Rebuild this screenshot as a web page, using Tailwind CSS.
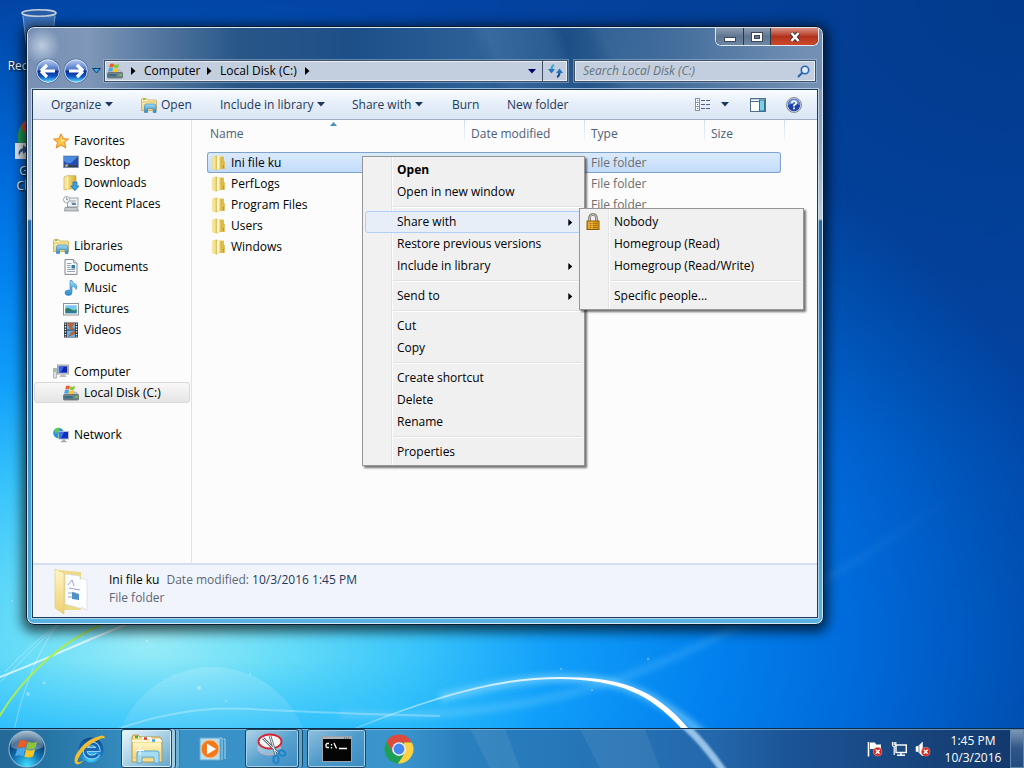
<!DOCTYPE html>
<html lang="en">
<head>
<meta charset="utf-8">
<title>Local Disk (C:)</title>
<script src="https://cdn.jsdelivr.net/npm/@tailwindcss/browser@4"></script>
</head>
<body class="font-['Open_Sans','Noto_Sans',sans-serif] text-xs leading-4 text-black">
<svg class="absolute size-0" aria-hidden="true">
  <defs>
    <linearGradient id="gold" x1="0" x2="1"><stop offset="0" stop-color="#fbf0b4"/><stop offset=".5" stop-color="#ecd26c"/><stop offset="1" stop-color="#d3ac3c"/></linearGradient>
    <linearGradient id="pale" x1="0" y1="0" x2="0" y2="1"><stop offset="0" stop-color="#fff6c4"/><stop offset="1" stop-color="#efcf73"/></linearGradient>
    <linearGradient id="sky" x1="0" y1="0" x2="0" y2="1"><stop offset="0" stop-color="#9fdcf5"/><stop offset="1" stop-color="#2c86c8"/></linearGradient>
    <linearGradient id="orb" x1="0" y1="0" x2="0" y2="1"><stop offset="0" stop-color="#b9cdf2"/><stop offset=".46" stop-color="#4371c4"/><stop offset=".5" stop-color="#08298c"/><stop offset=".75" stop-color="#1259c9"/><stop offset="1" stop-color="#53e1ff"/></linearGradient>
    <radialGradient id="start" cx=".5" cy=".95" r=".95"><stop offset="0" stop-color="#3fe0ff"/><stop offset=".4" stop-color="#1478b8"/><stop offset=".72" stop-color="#0c3f70"/><stop offset="1" stop-color="#8ea9bd"/></radialGradient>
    <radialGradient id="ieball" cx=".5" cy=".85" r=".9"><stop offset="0" stop-color="#45d5ff"/><stop offset=".5" stop-color="#1a7cc8"/><stop offset="1" stop-color="#0e3b80"/></radialGradient>
    <symbol id="flag" viewBox="0 0 20 20">
      <path d="M3.500 3.500C5.500 2 7.500 2.200 10 3.500L8.700 9.200C6.500 8 4.500 8.200 2 9.300Z" fill="#ee5b24"/>
      <path d="M10.800 3.900C13.400 5.200 15.800 5 18.600 3.500L17 9.200C14.500 10.500 12 10.600 9.500 9.500Z" fill="#8cc43a"/>
      <path d="M1.800 10.200C4.200 9 6.300 9 8.500 10.100L7 16C4.900 14.800 2.600 14.900 0 16Z" fill="#4aa8ea"/>
      <path d="M9.300 10.500C11.800 11.600 14.200 11.500 16.800 10.200L15.200 16C12.600 17.300 10.200 17.300 7.800 16.300Z" fill="#fcc622"/>
    </symbol>
    <symbol id="disk" viewBox="0 0 16 16">
      <path d="M2 9L4 7H13L15.500 9.500Z" fill="#c6ccce" stroke="#8b9396" stroke-width=".5"/>
      <rect x=".5" y="9.500" width="15" height="5.500" rx="1" fill="#77848b" stroke="#566167" stroke-width=".7"/>
      <rect x="1.200" y="11" width="8.500" height="2.500" fill="#3b6f88"/><rect x="12.500" y="11" width="2" height="1.600" fill="#51e536"/>
      <use href="#flag" x="1" y="-1" width="12" height="12"/>
    </symbol>
    <symbol id="library" viewBox="0 0 16 16">
      <path d="M.5 2.500Q.5 1.500 1.500 1.500H5.500L6.500 3H14.500Q15.500 3 15.500 4V13.500H.5Z" fill="url(#pale)" stroke="#cfa94a" stroke-width=".8"/>
      <path d="M2 2.300H4.500" stroke="#45b53b"/><path d="M1 5H15" stroke="#d9b757" stroke-width=".8"/>
      <path d="M3.500 15.500V9Q3.500 7 5.500 7H13Q15 7 15 9V15.500H12.200V11.500H6.500V15.500Z" fill="url(#sky)" stroke="#2f82b8" stroke-width=".6"/>
    </symbol>
    <symbol id="star" viewBox="0 0 16 16"><path d="M8 .8L10.100 5.700L15.500 6.100L11.400 9.500L12.800 15L8 12L3.200 15L4.600 9.500L.5 6.100L5.900 5.700Z" fill="#ffc44a" stroke="#e88620" stroke-linejoin="round"/><path d="M8 3L9.300 6.800L12.500 7.200L8 9Z" fill="#ffe9a8"/></symbol>
    <symbol id="desktop" viewBox="0 0 16 16"><rect x=".5" y="2" width="15" height="11.500" fill="#1f4fb4" stroke="#8a98ab" stroke-width=".8"/><path d="M1 2.500H15L8 9Q4 10 1 7Z" fill="#4d8be0"/><rect x="1" y="11" width="14" height="2.200" fill="#343f50"/><path d="M1.500 11.500L4 9.500L5.500 11.500L4 13Z" fill="#f48e34"/><circle cx="3" cy="12" r="1" fill="#58b9f3"/></symbol>
    <symbol id="downloads" viewBox="0 0 16 16"><path d="M1 2L4 .7H13V14H5L1 15Z" fill="url(#gold)" stroke="#c19c3a" stroke-width=".6"/><path d="M4.500 1V14" stroke="#fdf5cf"/><path d="M10 7H14V11H16L12 15.700L7.800 11H10Z" fill="#36a3e5" stroke="#1767a8" stroke-width=".7"/></symbol>
    <symbol id="recent" viewBox="0 0 16 16"><rect x="4.500" y="2" width="10.500" height="9" fill="#eef2f4" stroke="#878f96" stroke-width=".8"/><path d="M7 5H13M8 7H12" stroke="#97a4b0"/><path d="M9 7H13V9H9Z" fill="#5a8aa7"/><path d="M2 11.500H14L15.500 15H1.500Z" fill="#c5cace" stroke="#7e858a" stroke-width=".7"/><circle cx="3.600" cy="3.600" r="3.100" fill="#fff" stroke="#8b99a6" stroke-width=".9"/><path d="M3.600 1.500V3.800H5.200" fill="none" stroke="#5b6b78" stroke-width=".8"/></symbol>
    <symbol id="document" viewBox="0 0 16 16"><path d="M2 .6H10.500L14 4V15.400H2Z" fill="#fdfdfd" stroke="#80878c"/><path d="M10.500 .6V4H14" fill="#d9dfe4" stroke="#80878c" stroke-width=".7"/><path d="M4 4.500H8.500M4 6.500H7.500M4 8.500H7.500M4 10.500H12M4 12.500H12" stroke="#8a9db4" stroke-width=".9"/><rect x="8.500" y="6" width="3.500" height="3.500" fill="#327ba8"/></symbol>
    <symbol id="music" viewBox="0 0 16 16"><path d="M7 .5H9Q9.500 3 12.500 4Q15 6 13 9.500Q13 6.500 9 6.200V12Q9 15.500 5.500 15.500Q2 15.500 2 12.800Q2 10 5.500 10L7 10.400Z" fill="url(#sky)" stroke="#2a7fc4" stroke-width=".6"/></symbol>
    <symbol id="picture" viewBox="0 0 16 16"><rect x=".5" y="2.500" width="15" height="11.500" fill="#fff" stroke="#8b9399"/><rect x="2.300" y="4.300" width="11.400" height="8" fill="#79c6ee"/><path d="M2.300 7.500Q5 6 8 8.300T13.700 8.300V10H2.300Z" fill="#2e8050"/><path d="M2.300 10H13.700V12.300H2.300Z" fill="#32799e"/></symbol>
    <symbol id="video" viewBox="0 0 16 16"><rect x="1" y=".5" width="14" height="15" fill="#2d3740"/><rect x="4" y="1" width="8" height="6.500" fill="#6daee0"/><path d="M4 1H12L9 5L12 7.500H7Z" fill="#b5653d"/><rect x="4" y="8.500" width="8" height="6.500" fill="#5fb4ed"/><path d="M5 15L8 10L12 9V12Z" fill="#b5653d"/><path d="M2.500 1.500V15M13.500 1.500V15" stroke="#fff" stroke-width="1.400" stroke-dasharray="1.300 1.300"/></symbol>
    <symbol id="computer" viewBox="0 0 16 16"><rect x="4.500" y="1" width="11" height="9" fill="#d2d5da" stroke="#8d949b" stroke-width=".8"/><rect x="5.800" y="2.300" width="8.500" height="6.400" fill="#0f25b0"/><path d="M5.800 2.300H11L8 8.700H5.800Z" fill="#3b65e0"/><path d="M8 10.500H12L13.500 13H6.500Z" fill="#b9bec3"/><rect x=".7" y="4.500" width="2.600" height="9.500" fill="#e2e6e8" stroke="#8d949b" stroke-width=".7"/><rect x="1.200" y="5.500" width="1.500" height="2" fill="#45bf39"/></symbol>
    <symbol id="network" viewBox="0 0 16 16"><circle cx="5.500" cy="6" r="5.300" fill="#2c8fe0"/><path d="M2 2Q5 0 7 1.500Q6 5 3 6.500Q1 5 2 2ZM5 7Q8 7 8 9L5.500 11Q4 9 5 7Z" fill="#59cf47"/><rect x="6" y="4.500" width="9.500" height="7.500" fill="#1230bd" stroke="#b9c2d8" stroke-width=".9"/><path d="M6.500 5H11L8 11.500H6.500Z" fill="#4470e8"/><path d="M9.500 12.500H12V14H13.500V15.200H8V14H9.500Z" fill="#9fa6ad"/></symbol>
    <symbol id="folder" viewBox="0 0 16 16"><path d="M1.500 2L5 .5L9.500 1.500H13V14H9L5.500 15.500L1.500 14Z" fill="#e6cb60"/><path d="M1.500 2L5 1V15L1.500 14Z" fill="#f5e490"/><path d="M5.500 1.500L8.500 .8V13.500L5.500 15.200Z" fill="#fdf6c6"/><path d="M9.500 2H12.500V6H13.800V14H9.500Z" fill="#dcb84a"/><path d="M5.200 1V15.200" stroke="#b99732" stroke-width=".6"/><path d="M12.500 10V13" stroke="#49a3cf" stroke-width=".8"/></symbol>
    <symbol id="lock" viewBox="0 0 16 18"><path d="M4.500 9V5.500Q4.500 1.500 8 1.500T11.500 5.500V9" fill="none" stroke="#6e6a60" stroke-width="2.600"/><path d="M4.500 9V5.500Q4.500 1.500 8 1.500T11.500 5.500V9" fill="none" stroke="#d8d4c4" stroke-width="1"/><rect x="2" y="8" width="12" height="8.500" fill="#dc9a1c" stroke="#8a5a0c"/><path d="M3 10.500H13M3 12.500H13M3 14.500H13" stroke="#a86c10" stroke-width=".8"/><path d="M4 8.500V16M7 8.500V16" stroke="#ffd76c" stroke-width=".8"/></symbol>
    <symbol id="chrome" viewBox="0 0 48 48"><circle cx="24" cy="24" r="23" fill="#4caf50"/><path d="M4 12.500A23 23 0 0 1 44.500 13.500H24L14 30Z" fill="#dd4b3e"/><path d="M44.500 13.500A23 23 0 0 1 22 47L33.500 29L32 13.500Z" fill="#fdd045"/><path d="M4 12.500L14.200 29.500L24 34.500H31L22 47A23 23 0 0 1 4 12.500Z" fill="#1e9f57"/><circle cx="24" cy="24" r="11" fill="#f4f6f8"/><circle cx="24" cy="24" r="8.700" fill="#4587f3"/></symbol>
    <symbol id="down" viewBox="0 0 8 5"><path d="M0 0H8L4 4.500Z" fill="currentColor"/></symbol>
    <symbol id="right" viewBox="0 0 5 8"><path d="M0 0V8L4.500 4Z" fill="currentColor"/></symbol>
    <symbol id="badge" viewBox="0 0 10 10"><circle cx="5" cy="5" r="4.700" fill="#d8281c" stroke="#f7c3bd" stroke-width=".5"/><path d="M3 3L7 7M7 3L3 7" stroke="#fff" stroke-width="1.500"/></symbol>
  </defs>
</svg>

<div class="relative flex h-screen flex-col overflow-hidden bg-[#0a6fd8]">
  <!-- Wallpaper -->
  <svg class="absolute inset-0 size-full" viewBox="0 0 1024 768" preserveAspectRatio="none" aria-hidden="true">
    <defs>
      <radialGradient id="wall" gradientUnits="userSpaceOnUse" cx="0" cy="0" r="1" gradientTransform="translate(150 640) scale(960 650)">
        <stop offset="0" stop-color="#98ecf7"/><stop offset=".14" stop-color="#66dcf8"/><stop offset=".28" stop-color="#38c4fa"/><stop offset=".42" stop-color="#119ffa"/><stop offset=".58" stop-color="#0282ef"/><stop offset=".75" stop-color="#0068d8"/><stop offset=".9" stop-color="#0052b6"/><stop offset="1" stop-color="#0344a4"/>
      </radialGradient>
      <radialGradient id="shade" cx="1" cy="0" r=".6"><stop offset="0" stop-color="#002a60" stop-opacity=".35"/><stop offset="1" stop-color="#002a60" stop-opacity="0"/></radialGradient>
      <linearGradient id="floor" x1="0" y1="0" x2="0" y2="1"><stop offset=".86" stop-color="#00a8ff" stop-opacity="0"/><stop offset=".95" stop-color="#00a8ff" stop-opacity=".6"/></linearGradient>
      <linearGradient id="floorfade" x1="0" y1="0" x2="1" y2="0"><stop offset=".5" stop-color="#fff"/><stop offset="1" stop-color="#000"/></linearGradient>
      <mask id="leftside"><rect width="560" height="768" fill="url(#floorfade)"/></mask>
      <linearGradient id="trail" gradientUnits="userSpaceOnUse" x1="360" y1="0" x2="600" y2="0"><stop offset="0" stop-color="#fff" stop-opacity=".3"/><stop offset="1" stop-color="#fff"/></linearGradient>
      <linearGradient id="ray" gradientUnits="userSpaceOnUse" x1="360" y1="0" x2="960" y2="0"><stop offset="0" stop-color="#7fd4ff" stop-opacity=".45"/><stop offset="1" stop-color="#7fd4ff" stop-opacity="0"/></linearGradient>
      <linearGradient id="dome" x1="0" y1="0" x2="0" y2="1"><stop offset="0" stop-color="#fff" stop-opacity=".16"/><stop offset=".5" stop-color="#fff" stop-opacity=".03"/></linearGradient>
      <filter id="soft" x="-20%" y="-20%" width="140%" height="140%"><feGaussianBlur stdDeviation="3"/></filter>
    </defs>
    <rect width="1024" height="768" fill="url(#wall)"/>
    <rect width="1024" height="768" fill="url(#shade)"/>
    <rect width="560" height="768" fill="url(#floor)" mask="url(#leftside)" opacity=".7"/>
    <circle cx="212" cy="765" r="98" fill="url(#dome)"/>
    <path d="M340 714Q540 725 700 645Q840 580 960 490" fill="none" stroke="url(#ray)" stroke-width="7" filter="url(#soft)"/>
    <path d="M440 698Q520 678 560 678C620 678 660 690 740 768" fill="none" stroke="#8fdcff" stroke-opacity=".6" stroke-width="8" filter="url(#soft)"/>
    <path d="M340 734C440 693 500 677 560 677C620 677 654 688 688 728L726 770L716 770L681 728C650 694 620 680 560 679C500 679 440 695 340 735Z" fill="url(#trail)"/>
    <path d="M110 732Q180 705 250 709T440 716" fill="none" stroke="#fff" stroke-opacity=".28" stroke-width="2"/>
    <path d="M0 677C50 658 90 638 150 615" fill="none" stroke="#fff" stroke-opacity=".7" stroke-width="2"/>
    <path d="M0 682C20 664 40 640 62 622M5 672C24 652 44 634 60 622M14 732C22 690 40 645 60 622" fill="none" stroke="#fff" stroke-opacity=".35"/>
    <path d="M-4 722C20 680 60 640 112 620" fill="none" stroke="#a8ec5a" stroke-width="2"/>
    <g fill="#fff" fill-opacity=".35"><circle cx="28" cy="694" r="2"/><circle cx="44" cy="683" r="1.500"/><circle cx="199" cy="688" r="2"/><circle cx="147" cy="641" r="1.200"/><circle cx="226" cy="701" r="1"/><circle cx="250" cy="674" r="1"/><circle cx="12" cy="601" r="1"/><circle cx="648" cy="659" r="1.200"/><circle cx="561" cy="669" r="1"/><circle cx="592" cy="690" r="1"/></g>
  </svg>

  <main class="relative min-h-0 flex-1">
    <!-- Desktop shortcuts -->
    <div class="absolute top-2 left-[2px] flex w-[74px] flex-col gap-10 text-center leading-[15px] text-white [text-shadow:1px_1px_2px_#000]">
      <a href="#" class="flex flex-col items-center gap-[2px]">
        <svg class="size-12" viewBox="0 0 48 48" aria-hidden="true"><path d="M7 4L12 44Q24 50 36 44L41 4Z" fill="#7fa6d8" fill-opacity=".45"/><path d="M8 8L12 44M40 8L36 44" stroke="#b9cce8" stroke-opacity=".6"/><ellipse cx="24" cy="5" rx="17" ry="3.200" fill="#2a5da8" stroke="#c8d3df" stroke-width="1.600"/></svg>
        <span class="whitespace-nowrap">Recycle Bin</span>
      </a>
      <a href="#" class="flex flex-col items-center gap-[2px]">
        <svg class="size-12" viewBox="0 0 48 48" aria-hidden="true"><use href="#chrome" x="2" y="2" width="44" height="44"/><rect x="0" y="30" width="16" height="16" fill="#e9eef2"/><path d="M4 43Q2 37 8 35V32L14 37L8 41V38Q5 39 4 43Z" fill="#2b5fa0"/></svg>
        <span>Google Chrome</span>
      </a>
    </div>

    <!-- Explorer window -->
    <section aria-label="Local Disk (C:)" class="absolute top-[26px] right-[200px] bottom-[103px] left-[26px] flex flex-col rounded-lg border border-[#0b1c2e] bg-[linear-gradient(180deg,#7691b4_0,#8fa6c6_110px,#b8cbe0_192px,#2467a3_194px,#3b93cb_420px,#5ab2e0_100%)] px-[5px] pb-[6px] shadow-[0_3px_12px_4px_rgba(0,0,0,0.65),inset_0_0_0_1px_rgba(230,242,252,0.85)]">
      <div class="-mx-1 mt-px flex h-[61px] flex-col rounded-t-md bg-[radial-gradient(circle_at_14px_18px,rgba(225,235,248,.65)_0,rgba(225,235,248,0)_18px),linear-gradient(65deg,transparent_57%,rgba(120,165,205,.16)_59%,rgba(120,165,205,.12)_66%,transparent_68%,transparent_71%,rgba(120,165,205,.12)_73%,transparent_80%),linear-gradient(90deg,#7790b4_0,#7f97b8_60px,#53779f_130px,#285688_210px,#1d4f88_330px,#2e6198_450px,#1d4f86_540px,#346294_600px,#7390b4_780px)]">
        <div class="flex h-[18px] justify-end pr-[3px]">
          <div class="flex rounded-b-md border border-t-0 border-[#dfe9f2] bg-[#26394f]">
            <button aria-label="Minimize" class="grid w-[27px] place-items-center rounded-bl-md bg-linear-to-b from-[#8d9db3] via-[#5f7590] via-50% to-[#6e87a3]"><svg class="h-3 w-3" viewBox="0 0 12 12"><rect x=".5" y="6.500" width="11" height="4" fill="#fff" stroke="#3d4758"/></svg></button>
            <button aria-label="Maximize" class="grid w-[27px] place-items-center border-l border-[#26394f] bg-linear-to-b from-[#8d9db3] via-[#5f7590] via-50% to-[#6e87a3]"><svg class="h-3 w-3" viewBox="0 0 12 12"><rect x="2" y="3" width="8" height="6" fill="none" stroke="#3d4758" stroke-width="4"/><rect x="2" y="3" width="8" height="6" fill="none" stroke="#fff" stroke-width="2"/></svg></button>
            <button aria-label="Close" class="grid w-[48px] place-items-center rounded-br-md border-l border-[#26394f] bg-linear-to-b from-[#d98f83] via-[#b2321c] via-50% to-[#cf4a2c]"><svg class="h-3 w-3" viewBox="0 0 12 12"><path d="M2.500 2L9.500 10M9.500 2L2.500 10" stroke="#4a2b2b" stroke-width="4.200"/><path d="M2.500 2L9.500 10M9.500 2L2.500 10" stroke="#fff" stroke-width="2.600"/></svg></button>
          </div>
        </div>
        <div class="mt-[14px] flex items-center pr-[6px] pl-[7px]">
          <button aria-label="Back" class="-my-1 rounded-full"><svg class="size-[26px]" viewBox="0 0 26 26"><circle cx="13" cy="13" r="12.500" fill="#54719c"/><circle cx="13" cy="13" r="11.300" fill="url(#orb)" stroke="#d7e4f5"/><path d="M6 13L12 7M6 13L12 19M7 13H20" fill="none" stroke="#fff" stroke-width="3.200"/></svg></button>
          <button aria-label="Forward" class="-my-1 ml-[2px] rounded-full"><svg class="size-[26px]" viewBox="0 0 26 26"><circle cx="13" cy="13" r="12.500" fill="#54719c"/><circle cx="13" cy="13" r="11.300" fill="url(#orb)" stroke="#d7e4f5"/><path d="M20 13L14 7M20 13L14 19M19 13H6" fill="none" stroke="#fff" stroke-width="3.200"/></svg></button>
          <button aria-label="Recent pages" class="ml-[3px]"><svg class="h-[6px] w-[9px]" viewBox="0 0 9 6"><path d="M.5 .5H8.500L4.500 5Z" fill="#3ca3e4" stroke="#173b68"/></svg></button>
          <nav aria-label="Address" class="ml-[3px] flex h-[22px] flex-1 items-center border border-[#3f5168] bg-[#c3cfde] pl-[2px] shadow-[inset_0_0_0_1px_#e6edf5,0_0_0_1px_rgba(190,210,230,.4)]">
            <svg class="size-4" aria-hidden="true"><use href="#disk"/></svg>
            <svg class="ml-2 h-2 w-[5px]" aria-hidden="true"><use href="#right"/></svg>
            <a href="#" class="ml-2 w-[57px] whitespace-nowrap">Computer</a>
            <svg class="ml-[6px] h-2 w-[5px]" aria-hidden="true"><use href="#right"/></svg>
            <a href="#" class="ml-2 w-[77px] whitespace-nowrap">Local Disk (C:)</a>
            <svg class="ml-2 h-2 w-[5px]" aria-hidden="true"><use href="#right"/></svg>
            <button aria-label="Previous locations" class="ml-auto px-[6px] text-[#00006a]"><svg class="h-[5px] w-2"><use href="#down"/></svg></button>
            <button aria-label="Refresh" class="grid h-full w-[25px] place-items-center border-l border-[#3f5168]"><svg class="h-[14px] w-[15px]" viewBox="0 0 15 14"><path d="M6 1Q3.500 2 3.500 6" fill="none" stroke="#38a9d5" stroke-width="2.200"/><path d="M0 5H7L3.500 9.500Z" fill="#2474bf"/><path d="M11.500 8Q11.500 12 9 13" fill="none" stroke="#1c5090" stroke-width="2.200"/><path d="M8 9H15L11.500 4.500Z" fill="#2474bf"/></svg></button>
          </nav>
          <label class="ml-[6px] flex h-[22px] w-[242px] items-center border border-[#3f5168] bg-[#c3cfde] pr-[5px] pl-2 shadow-[inset_0_0_0_1px_#e6edf5,0_0_0_1px_rgba(190,210,230,.4)]">
            <span class="sr-only">Search Local Disk (C:)</span>
            <input type="text" placeholder="Search Local Disk (C:)" class="h-5 min-w-0 flex-1 bg-transparent leading-5 italic outline-none placeholder:text-[#68727f]">
            <svg class="size-[13px]" viewBox="0 0 13 13" aria-hidden="true"><circle cx="8" cy="5" r="3.700" fill="#dcecf8" stroke="#2866b4" stroke-width="1.600"/><path d="M5.500 7.500L1 12" stroke="#2866b4" stroke-width="2.200"/></svg>
          </label>
        </div>
      </div>

      <div class="flex min-h-0 flex-1 flex-col border border-[#1e3a58] bg-[#fcfcfc] shadow-[0_0_0_1px_rgba(210,230,245,.7)]">
        <!-- Command bar -->
        <div role="toolbar" aria-label="Commands" class="flex h-[30px] shrink-0 items-center border-b border-[#a0afc3] bg-linear-to-b from-[#fafcfe] via-[#e5eef9] via-50% to-[#dbe5f4] pr-[15px] pl-[18px] whitespace-nowrap text-[#1e395b]">
          <button class="flex w-[90px] items-center gap-1">Organize <svg class="h-[5px] w-2"><use href="#down"/></svg></button>
          <button class="flex w-[79px] items-center gap-1"><svg class="size-4"><use href="#library"/></svg>Open</button>
          <button class="flex w-[132px] items-center gap-1">Include in library <svg class="h-[5px] w-2"><use href="#down"/></svg></button>
          <button class="flex w-[100px] items-center gap-1">Share with <svg class="h-[5px] w-2"><use href="#down"/></svg></button>
          <button class="w-[55px] text-left">Burn</button>
          <button>New folder</button>
          <button aria-label="Change view" class="ml-auto"><svg class="h-[13px] w-4" viewBox="0 0 16 13"><rect x=".5" y=".5" width="4" height="12" fill="#fff" stroke="#8294aa"/><path d="M1 4.500H4M1 8.500H4" stroke="#8294aa"/><path d="M2 2.500H3.200M2 10.500H3.200" stroke="#4a7ac0"/><path d="M2 6.500H3.200" stroke="#d03c3c"/><path d="M6 2.500H10M11 2.500H15M6 6.500H10M11 6.500H15M6 10.500H10M11 10.500H15" stroke="#4d6481"/></svg></button>
          <button aria-label="More options" class="ml-[10px]"><svg class="h-[5px] w-2"><use href="#down"/></svg></button>
          <button aria-label="Show the preview pane" class="ml-[21px]"><svg class="h-[14px] w-4" viewBox="0 0 16 14"><rect x=".5" y=".5" width="15" height="13" fill="#fff" stroke="#4f6f90"/><path d="M1 1.500H15" stroke="#bcd0e2"/><path d="M1 3.500H10" stroke="#4f6f90"/><rect x="9.500" y="2" width="5" height="11" fill="#77d3ea" stroke="#3d6d8e"/></svg></button>
          <button aria-label="Help" class="ml-5"><svg class="size-4" viewBox="0 0 16 16"><circle cx="8" cy="8" r="7.500" fill="#d3d8df" stroke="#6c7585" stroke-width=".8"/><circle cx="8" cy="8" r="6.200" fill="#1c42a8"/><path d="M2 8A6 6 0 0 1 14 8Q8 5 2 8Z" fill="#6c8fdd"/><path d="M5.800 6.300Q5.800 4 8 4T10.200 6Q10.200 7.200 8 8.300V9.500M8 10.600V12.200" fill="none" stroke="#fff" stroke-width="1.700"/></svg></button>
        </div>

        <div class="flex min-h-0 flex-1">
          <!-- Navigation pane -->
          <nav aria-label="Folders" class="flex w-[159px] shrink-0 flex-col gap-[21px] border-r border-[#d6e5f5] px-px pt-[10px] [&_a]:flex [&_a]:h-[21px] [&_a]:items-center [&_a]:gap-[5px] [&_a]:whitespace-nowrap [&_svg]:size-4">
            <div>
              <a href="#" class="pl-[19px]"><svg><use href="#star"/></svg>Favorites</a>
              <a href="#" class="pl-[29px]"><svg><use href="#desktop"/></svg>Desktop</a>
              <a href="#" class="pl-[29px]"><svg><use href="#downloads"/></svg>Downloads</a>
              <a href="#" class="pl-[29px]"><svg><use href="#recent"/></svg>Recent Places</a>
            </div>
            <div>
              <a href="#" class="pl-[19px]"><svg><use href="#library"/></svg>Libraries</a>
              <a href="#" class="pl-[29px]"><svg><use href="#document"/></svg>Documents</a>
              <a href="#" class="pl-[29px]"><svg><use href="#music"/></svg>Music</a>
              <a href="#" class="pl-[29px]"><svg><use href="#picture"/></svg>Pictures</a>
              <a href="#" class="pl-[29px]"><svg><use href="#video"/></svg>Videos</a>
            </div>
            <div>
              <a href="#" class="pl-[19px]"><svg><use href="#computer"/></svg>Computer</a>
              <a href="#" aria-current="page" class="rounded-[3px] border border-[#d9d9d9] bg-linear-to-b from-[#f8f8f8] to-[#e5e5e5] pl-[28px]"><svg><use href="#disk"/></svg>Local Disk (C:)</a>
            </div>
            <div>
              <a href="#" class="pl-[19px]"><svg><use href="#network"/></svg>Network</a>
            </div>
          </nav>

          <!-- File list -->
          <div class="relative min-w-0 flex-1 pl-[15px]">
            <svg class="absolute top-[2px] left-[138px] h-1 w-[7px]" viewBox="0 0 7 4" aria-hidden="true"><path d="M0 4H7L3.500 0Z" fill="#4a8fb8"/></svg>
            <table class="w-[574px] table-fixed border-separate border-spacing-0 text-left whitespace-nowrap">
              <thead class="text-[#4c607a] [&_th]:relative [&_th]:font-normal [&_th]:after:absolute [&_th]:after:top-0 [&_th]:after:right-0 [&_th]:after:h-5 [&_th]:after:w-px [&_th]:after:bg-linear-to-b [&_th]:after:from-[#cfe0f2] [&_th]:after:to-[#eef4fa]">
                <tr class="h-8 align-top">
                  <th scope="col" class="w-[258px] pt-[6px] pl-[3px]">Name</th>
                  <th scope="col" class="w-[120px] pt-[6px] pl-[6px]">Date modified</th>
                  <th scope="col" class="w-[120px] pt-[6px] pl-[6px]">Type</th>
                  <th scope="col" class="pt-[6px] pl-[6px] after:-mr-1">Size</th>
                </tr>
              </thead>
              <tbody class="text-[#6d6d6d] [&_td]:h-[21px] [&_td]:p-0 [&_td:first-child]:text-black [&_td:nth-child(3)]:pl-[6px] [&_div]:flex [&_div]:items-center [&_div]:gap-1 [&_div]:pl-1 [&_svg]:size-4">
                <tr aria-selected="true" class="rounded-[3px] bg-linear-to-b from-[#dcebfc] to-[#c1dbfc] outline-1 -outline-offset-1 outline-[#7da2ce]"><td><div><svg><use href="#folder"/></svg>Ini file ku</div></td><td></td><td>File folder</td><td></td></tr>
                <tr><td><div><svg><use href="#folder"/></svg>PerfLogs</div></td><td></td><td>File folder</td><td></td></tr>
                <tr><td><div><svg><use href="#folder"/></svg>Program Files</div></td><td></td><td>File folder</td><td></td></tr>
                <tr><td><div><svg><use href="#folder"/></svg>Users</div></td><td></td><td></td><td></td></tr>
                <tr><td><div><svg><use href="#folder"/></svg>Windows</div></td><td></td><td></td><td></td></tr>
              </tbody>
            </table>
          </div>
        </div>

        <!-- Details pane -->
        <div class="flex h-[54px] shrink-0 items-start gap-[15px] border-t-2 border-[#d3dfee] bg-[#f1f5fb] pt-[3px] pl-[21px] text-[#5a6779]">
          <svg class="h-[46px] w-10" viewBox="0 0 40 46" aria-hidden="true"><path d="M3 2L27 4V42H10Z" fill="#eed985"/><path d="M11 6L26 8V11L32 12V42L11 36Z" fill="#fcfdff" stroke="#d4dae4" stroke-width=".7"/><path d="M14 17L18 12L20 18M15 20L26 22M14 25H22M14 29H22" fill="none" stroke="#9aa5d8"/><path d="M18 24L25 26V32L18 31Z" fill="#4f91c6"/><path d="M27 10L33 12V42L27 39" fill="#fff" stroke="#ccd3dd" stroke-width=".6"/><path d="M1 1L10 5V46L1 40Z" fill="url(#pale)" stroke="#e3c86c" stroke-width=".6"/></svg>
          <div class="pt-[3px] leading-[18px]">
            <p class="flex gap-[7px]"><span class="text-black">Ini file ku</span><span>Date modified: <span class="text-[#1e395b]">10/3/2016 1:45 PM</span></span></p>
            <p>File folder</p>
          </div>
        </div>
      </div>
    </section>

    <!-- Context menu -->
    <div role="menu" class="absolute top-[156px] left-[362px] w-[223px] border border-[#979797] bg-[linear-gradient(90deg,#f1f1f1_28px,#e2e3e3_28px,#e2e3e3_29px,#fff_29px,#fff_30px,#f0f0f0_30px)] p-[2px] shadow-[2px_2px_2px_rgba(0,0,0,0.55)] [&_button]:flex [&_button]:h-[22px] [&_button]:w-full [&_button]:items-center [&_button]:justify-between [&_button]:pr-[9px] [&_button]:pl-8 [&_hr]:my-[3px] [&_hr]:ml-7 [&_hr]:h-[2px] [&_hr]:border-t-[#e0e0e0] [&_hr]:bg-white [&_svg]:h-[7px] [&_svg]:w-[5px]">
      <button role="menuitem" class="font-bold">Open</button>
      <button role="menuitem">Open in new window</button>
      <hr>
      <button role="menuitem" class="rounded-[3px] bg-[#e8eef7] outline-1 -outline-offset-1 outline-[#aecff7]">Share with <svg aria-hidden="true"><use href="#right"/></svg></button>
      <button role="menuitem">Restore previous versions</button>
      <button role="menuitem">Include in library <svg aria-hidden="true"><use href="#right"/></svg></button>
      <hr>
      <button role="menuitem">Send to <svg aria-hidden="true"><use href="#right"/></svg></button>
      <hr>
      <button role="menuitem">Cut</button>
      <button role="menuitem">Copy</button>
      <hr>
      <button role="menuitem">Create shortcut</button>
      <button role="menuitem">Delete</button>
      <button role="menuitem">Rename</button>
      <hr>
      <button role="menuitem">Properties</button>
    </div>

    <!-- Share with submenu -->
    <div role="menu" aria-label="Share with" class="absolute top-[208px] left-[579px] w-[225px] border border-[#979797] bg-[linear-gradient(90deg,#f1f1f1_28px,#e2e3e3_28px,#e2e3e3_29px,#fff_29px,#fff_30px,#f0f0f0_30px)] p-[2px] shadow-[2px_2px_2px_rgba(0,0,0,0.55)] [&_button]:flex [&_button]:h-[22px] [&_button]:w-full [&_button]:items-center [&_button]:pl-8 [&_hr]:my-[3px] [&_hr]:ml-7 [&_hr]:h-[2px] [&_hr]:border-t-[#e0e0e0] [&_hr]:bg-white">
      <svg class="absolute top-1 left-[5px] h-[18px] w-4" aria-hidden="true"><use href="#lock"/></svg>
      <button role="menuitem">Nobody</button>
      <button role="menuitem">Homegroup (Read)</button>
      <button role="menuitem">Homegroup (Read/Write)</button>
      <hr>
      <button role="menuitem">Specific people...</button>
    </div>
  </main>

  <!-- Taskbar -->
  <footer class="relative flex h-10 items-stretch border-t border-[#0d2c48] bg-[linear-gradient(90deg,#246896_0,#2878a8_60px,#3990c4_140px,#3a95cd_400px,#2a80be_460px,#2472b4_620px,#2468ac_710px,#1c5496_790px,#163f74_960px,#12386c_100%)] shadow-[inset_0_1px_0_rgba(160,210,240,.55)]">
    <svg class="pointer-events-none absolute inset-0 size-full" viewBox="0 0 1024 40" preserveAspectRatio="none" aria-hidden="true">
      <path d="M470 0H505L520 40H490ZM580 0H645L660 40H600Z" fill="#fff" opacity=".07"/>
      <path d="M684 -4Q704 14 724 44" fill="none" stroke="#b5d9f6" stroke-opacity=".8" stroke-width="7" filter="blur(1px)"/>
    </svg>
    <button aria-label="Start" class="ml-[7px]"><svg class="size-10" viewBox="0 0 40 40"><circle cx="20" cy="20" r="18" fill="url(#start)" stroke="#a5cbe0" stroke-opacity=".7" stroke-width="1.200"/><path d="M4 18A16 16 0 0 1 36 18Q20 26 4 18Z" fill="#fff" opacity=".28"/><use href="#flag" x="8" y="8" width="24" height="24"/></svg></button>
    <button aria-label="Internet Explorer" class="ml-[25px]"><svg class="h-9 w-9" viewBox="0 0 36 36"><circle cx="19" cy="19" r="12.500" fill="url(#ieball)"/><path d="M13 18.500H26Q25.500 13 19.500 13T13 18.500Q13 26 20 26Q24 26 26 23" fill="none" stroke="#b5e5fb" stroke-width="4.600"/><path d="M13 18.500H26Q25.500 13 19.500 13T13 18.500Q13 26 20 26Q24 26 26 23" fill="none" stroke="#1768b4" stroke-width="3"/><path d="M25 8Q33 2 33 8.500Q33 6 28 8Q12 15 6 28Q4 34 12 29Q6 36 3 32Q1 26 8 18Q16 8 25 6Q31 3 33 6" fill="#f4bd30"/></svg></button>
    <button aria-label="Windows Explorer" class="ml-[13px] flex">
      <span class="grid h-full w-[51px] place-items-center rounded-[3px] border border-[#1d4560] bg-linear-to-br from-[#eaf6fb] via-[#a8d0e6] to-[#5fa6cd] shadow-[inset_0_0_0_1px_#d9effa]"><svg class="size-[34px]" viewBox="0 0 34 34"><path d="M2 6Q2 3 4 3H8L10 5H30L32 8V30H2Z" fill="#f5df95" stroke="#b89546"/><path d="M2 9H32" stroke="#fff6d0" stroke-width="2"/><path d="M3 11H31V27H3Z" fill="url(#pale)"/><path d="M12 6H20L22 8H31" fill="none" stroke="#fff" stroke-width="2"/><path d="M5 5H8" stroke="#35b53d" stroke-width="2.500"/><path d="M14 6.500H17" stroke="#cd4236" stroke-width="2.500"/><path d="M22 8.500H25" stroke="#3d9ee0" stroke-width="2.500"/><path d="M7 31V21Q7 19 9 19H27Q29 19 29 21V31H24V25H12V31Z" fill="#a6dcf2" stroke="#5aa8cc"/><path d="M10 14V23M6 18.500H14" stroke="#fff"/></svg></span>
      <span class="h-full w-[4px] rounded-r-[3px] border-r border-[#1d4560] bg-[#a0cce3]"></span><span class="h-full w-[4px] rounded-r-[3px] border-r border-[#3f7c9f] bg-[#6fb2d8]"></span>
    </button>
    <button aria-label="Windows Media Player" class="ml-[18px]"><svg class="h-7 w-[30px]" viewBox="0 0 30 28"><path d="M2 3H22V25H2Z" fill="#b5ddf0" stroke="#6ca9c9"/><path d="M22 3H24V25M25.500 4H27V24" fill="none" stroke="#a4d5ec"/><circle cx="12" cy="14" r="9" fill="#f17a1e" stroke="#fbc58d"/><path d="M9 8.500V19.500L18 14Z" fill="#fff"/></svg></button>
    <button aria-label="Snipping Tool" class="ml-[17px] flex">
      <span class="grid h-full w-[54px] place-items-center rounded-[3px] border border-[#1d4560] bg-linear-to-br from-[#b0d4e8] via-[#5aa3cf] to-[#3a8cc4] shadow-[inset_0_0_0_1px_#a5cfe6]"><svg class="size-8" viewBox="0 0 32 32"><ellipse cx="13" cy="15" rx="11.500" ry="7" fill="#c7dbe8" fill-opacity=".5" stroke="#dfaab0"/><ellipse cx="14" cy="8.500" rx="11.500" ry="7" fill="#f2f4f6" stroke="#d8232f" stroke-width="1.800"/><path d="M7 5L22 20M14 3L20 22" stroke="#5f6c78" stroke-width="2.600"/><path d="M7 5L22 20M14 3L20 22" stroke="#e8edf0"/><ellipse cx="26" cy="20" rx="3.500" ry="2.600" fill="none" stroke="#2185c8" stroke-width="2.200" transform="rotate(25 26 20)"/><ellipse cx="20" cy="26.500" rx="2.500" ry="4" fill="none" stroke="#2185c8" stroke-width="2.200"/></svg></span>
      <span class="h-full w-[4px] rounded-r-[3px] border-r border-[#1d4560] bg-[#5ba5d1]"></span>
    </button>
    <button aria-label="Command Prompt" class="ml-[4px] grid w-[59px] place-items-center rounded-[3px] border border-[#1d4560] bg-linear-to-br from-[#8fc0de] via-[#4f9bcb] to-[#3a8cc4] shadow-[inset_0_0_0_1px_#a5cfe6]"><svg class="h-[26px] w-[30px]" viewBox="0 0 30 26"><rect x=".5" y=".5" width="29" height="25" fill="#050505" stroke="#9aa3aa"/><path d="M1 2H29" stroke="#aab3ba" stroke-width="2"/><path d="M22 2H28" stroke="#444c54" stroke-dasharray="1 1"/><path d="M7 7.500H5L4 8.500V10.500L5 11.500H7M9.500 8V9.500M9.500 11V12.500M12 7L14.500 12.500M17 12.500H25" fill="none" stroke="#fff" stroke-width="1.300"/></svg></button>
    <button aria-label="Google Chrome" class="ml-[18px]"><svg class="size-[30px]"><use href="#chrome"/></svg></button>
    <div class="relative ml-auto flex items-center gap-2 text-white">
      <svg class="size-4" viewBox="0 0 16 16" aria-label="Action Center"><path d="M1.500 1V15.500" stroke="#fff" stroke-width="1.600"/><path d="M3 1.500H8L9 3.500H14V9.500H8L7 8H3Z" fill="#fff"/><use href="#badge" x="6" y="6" width="9.500" height="9.500"/></svg>
      <svg class="size-4" viewBox="0 0 16 16" aria-label="Network"><rect x="5" y="4" width="10.300" height="7.500" fill="#1d4b80" stroke="#fff" stroke-width="1.400"/><path d="M6 14.300H14M10 12V14" stroke="#fff" stroke-width="1.500"/><path d="M1.500 1V4Q1.500 5.500 3 5.500T4.800 4V1M3.200 1V4M3.200 5V14" fill="none" stroke="#fff" stroke-width="1.200"/></svg>
      <svg class="size-4" viewBox="0 0 16 16" aria-label="Volume"><path d="M1 5.500H3L7.500 1V15L3 10.500H1Z" fill="#fff" stroke="#fff" stroke-width=".5"/><path d="M4 4.500V11.500" stroke="#6e8aaa"/><use href="#badge" x="6" y="6" width="9.500" height="9.500"/></svg>
    </div>
    <time datetime="2016-10-03T13:45" class="mr-[6px] ml-[11px] flex w-[62px] flex-col justify-center text-center leading-[17px] whitespace-nowrap text-white"><span>1:45 PM</span><span>10/3/2016</span></time>
    <button aria-label="Show desktop" class="w-[14px] border border-[#5f86ae] bg-linear-to-b from-[#7f98b4] via-[#2f5686] to-[#234b80]"></button>
  </footer>
</div>
</body>
</html>
